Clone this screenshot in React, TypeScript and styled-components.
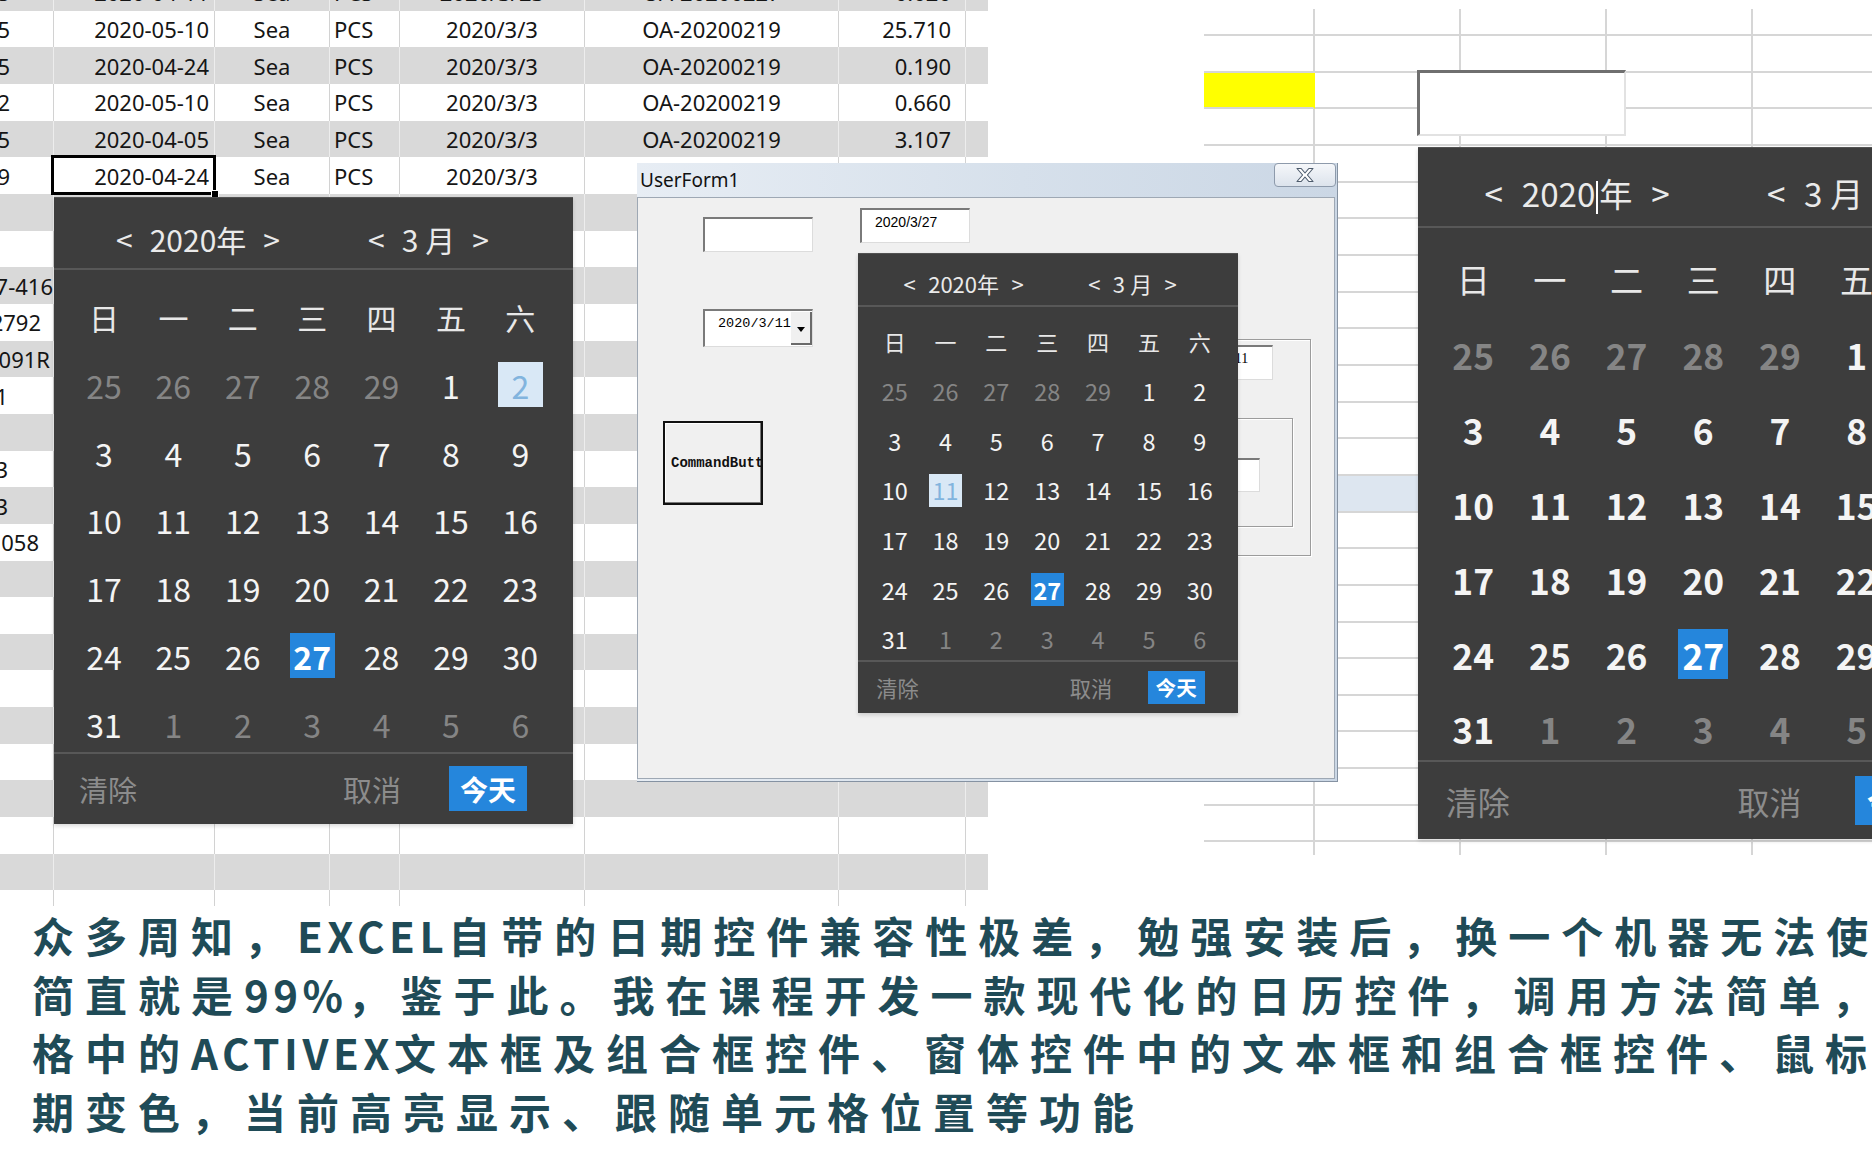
import React from "react"
import styled, { createGlobalStyle } from "styled-components"

const GlobalStyle = createGlobalStyle`
  html, body {
    margin: 0;
    padding: 0;
    background: #fff;
  }
  body {
    overflow: hidden;
  }
`

const ROW_H = 36.66
const WEEK = ["日", "一", "二", "三", "四", "五", "六"]

const DAYS: { n: number; other: boolean }[] = [
  ...[25, 26, 27, 28, 29].map((n) => ({ n, other: true })),
  ...Array.from({ length: 31 }, (_, i) => ({ n: i + 1, other: false })),
  ...Array.from({ length: 6 }, (_, i) => ({ n: i + 1, other: true })),
]

const LEFT_COLS = [
  { w: 54, align: "flex-end", pad: 0 },
  { w: 161, align: "flex-end", pad: 5 },
  { w: 115, align: "center", pad: 0 },
  { w: 70, align: "flex-start", pad: 4 },
  { w: 185, align: "center", pad: 0 },
  { w: 254, align: "center", pad: 0 },
  { w: 127, align: "flex-end", pad: 14 },
  { w: 22, align: "center", pad: 0 },
]

// first column: [text, right padding]
const FIRST_COL: [string, number][] = [
  ["3", 43], ["5", 43], ["5", 43], ["2", 43], ["5", 43], ["9", 43],
  ["", 0], ["", 0], ["37-416", 0], ["12792", 12], ["0091R", 3], ["1", 45],
  ["", 0], ["3", 45], ["3", 45], ["1058", 14],
]

const SHEET_DATA: string[][] = [
  ["2020-04-11", "Sea", "PCS", "2020/3/23", "OA-20200227", "0.020"],
  ["2020-05-10", "Sea", "PCS", "2020/3/3", "OA-20200219", "25.710"],
  ["2020-04-24", "Sea", "PCS", "2020/3/3", "OA-20200219", "0.190"],
  ["2020-05-10", "Sea", "PCS", "2020/3/3", "OA-20200219", "0.660"],
  ["2020-04-05", "Sea", "PCS", "2020/3/3", "OA-20200219", "3.107"],
  ["2020-04-24", "Sea", "PCS", "2020/3/3", "", ""],
]

const CAPTION = [
  "众多周知，EXCEL自带的日期控件兼容性极差，勉强安装后，换一个机器无法使",
  "简直就是99%，鉴于此。我在课程开发一款现代化的日历控件，调用方法简单，",
  "格中的ACTIVEX文本框及组合框控件、窗体控件中的文本框和组合框控件、鼠标",
  "期变色，当前高亮显示、跟随单元格位置等功能",
]

const Page = styled.div`
  position: relative;
  width: 1872px;
  height: 1170px;
  overflow: hidden;
  background: #fff;
  font-family: "Noto Sans CJK SC", "Noto Sans", sans-serif;
`

const Top = styled.div`
  display: flex;
  height: 906px;
`

/* ---------- left sheet ---------- */

const LeftSheet = styled.div`
  position: relative;
  width: 988px;
  height: 906px;
  flex-shrink: 0;
  overflow: hidden;
`

const SheetRows = styled.div`
  margin-top: -26px;
`

const SheetRow = styled.div<{ $shade: boolean }>`
  display: flex;
  height: ${ROW_H}px;
  background: ${(p) => (p.$shade ? "#d9d9d9" : "#fff")};
  font-family: "Noto Sans", sans-serif;
  font-size: 22px;
  color: #151515;
`

const Cell = styled.div<{ $w: number; $align: string; $pad: number; $shade: boolean; $last: boolean }>`
  width: ${(p) => p.$w}px;
  flex-shrink: 0;
  box-sizing: border-box;
  display: flex;
  align-items: center;
  justify-content: ${(p) => p.$align};
  padding-right: ${(p) => (p.$align === "flex-end" ? p.$pad : 0)}px;
  padding-left: ${(p) => (p.$align === "flex-start" ? p.$pad : 0)}px;
  overflow: hidden;
  white-space: nowrap;
  border-right: ${(p) => (p.$last ? "none" : `1px solid ${p.$shade ? "#ededed" : "#d2d2d2"}`)};
`

const Selection = styled.div`
  position: absolute;
  left: 51px;
  top: 155px;
  width: 165px;
  height: 40px;
  border: 3px solid #000;
  box-sizing: border-box;
`

const FillHandle = styled.div`
  position: absolute;
  right: -6px;
  bottom: -6px;
  width: 6px;
  height: 6px;
  background: #000;
  border: 1px solid #fff;
`

const Popup = styled.div<{ $x: number; $y: number }>`
  position: absolute;
  left: ${(p) => p.$x}px;
  top: ${(p) => p.$y}px;
  z-index: 2;
`

/* ---------- right sheet ---------- */

const RightSheet = styled.div`
  position: relative;
  margin-left: 216px;
  margin-top: 9px;
  width: 668px;
  flex-shrink: 0;
`

const Grid = styled.div`
  display: grid;
  grid-template-columns: 111px repeat(4, 146px);
  grid-template-rows: 27px repeat(22, ${ROW_H}px) 13px;
`

const GridCell = styled.div<{ $fill?: string; $open?: boolean }>`
  box-sizing: border-box;
  background: ${(p) => p.$fill || "#fff"};
  border-right: 2px solid ${(p) => (p.$fill === "#ffff00" ? "transparent" : "#d6d6d6")};
  border-bottom: ${(p) => (p.$open ? "none" : "2px solid #d6d6d6")};
`

const SheetTextBox = styled.div`
  position: absolute;
  left: 213px;
  top: 61px;
  width: 209px;
  height: 66px;
  box-sizing: border-box;
  background: #fff;
  border-top: 3px solid #6f6f6f;
  border-left: 3px solid #6f6f6f;
  border-right: 2px solid #e2e2e2;
  border-bottom: 2px solid #e2e2e2;
`

/* ---------- calendar ---------- */

const CalBox = styled.div<{ $s: number }>`
  width: ${(p) => 519 * p.$s}px;
  background: #3d3d3d;
  color: #efefef;
  font-family: "Noto Sans CJK SC", sans-serif;
  border-top: 1px solid #525252;
  box-sizing: border-box;
  box-shadow: 0 2px 4px rgba(0, 0, 0, 0.15);
`

const CalHead = styled.div<{ $s: number }>`
  height: ${(p) => 72 * p.$s}px;
  box-sizing: border-box;
  display: flex;
  align-items: center;
  justify-content: center;
  gap: ${(p) => 88 * p.$s}px;
  padding: ${(p) => 11 * p.$s}px ${(p) => 22 * p.$s}px 0 0;
  border-bottom: 2px solid #585858;
  font-size: ${(p) => 30 * p.$s}px;
  color: #eaeaea;
`

const Stepper = styled.div<{ $s: number }>`
  display: flex;
  align-items: center;
  gap: ${(p) => 17 * p.$s}px;
`

const MonthNum = styled.span<{ $s: number }>`
  margin-right: ${(p) => 7 * p.$s}px;
`

const Caret = styled.span<{ $s: number }>`
  display: inline-block;
  width: 2px;
  height: ${(p) => 30 * p.$s}px;
  margin: 0 1px;
  background: #fff;
  vertical-align: middle;
`

const Days = styled.div<{ $s: number }>`
  display: grid;
  grid-template-columns: repeat(7, ${(p) => 69.4 * p.$s}px);
  grid-auto-rows: ${(p) => 56 * p.$s}px;
  row-gap: ${(p) => 11.8 * p.$s}px;
  padding: ${(p) => 19 * p.$s}px 0 0 ${(p) => 15.3 * p.$s}px;
`

const Day = styled.div<{ $s: number; $tone: "week" | "cur" | "other"; $bold: boolean }>`
  display: flex;
  align-items: center;
  justify-content: center;
  font-size: ${(p) => (p.$tone === "week" ? 30 : 32) * p.$s}px;
  font-weight: ${(p) => (p.$bold && p.$tone !== "week" ? 700 : 400)};
  color: ${(p) => (p.$tone === "other" ? "#858585" : p.$tone === "week" ? "#e8e8e8" : "#f4f4f4")};
`

const DayNum = styled.span<{ $s: number; $mark: "none" | "today" | "light" }>`
  display: flex;
  align-items: center;
  justify-content: center;
  width: ${(p) => 45 * p.$s}px;
  height: ${(p) => 45 * p.$s}px;
  background: ${(p) => (p.$mark === "today" ? "#2586dc" : p.$mark === "light" ? "#d9e8f6" : "transparent")};
  color: ${(p) => (p.$mark === "today" ? "#fff" : p.$mark === "light" ? "#82b4de" : "inherit")};
  font-weight: ${(p) => (p.$mark === "today" ? 700 : "inherit")};
`

const CalFoot = styled.div<{ $s: number }>`
  height: ${(p) => 72 * p.$s}px;
  box-sizing: border-box;
  border-top: 2px solid #585858;
  display: flex;
  align-items: center;
  padding: 0 ${(p) => 46 * p.$s}px 0 ${(p) => 25 * p.$s}px;
  font-size: ${(p) => 29 * p.$s}px;
  color: #8c8c8c;
`

const FootSpacer = styled.div`
  flex: 1;
`

const TodayBtn = styled.div<{ $s: number }>`
  margin-left: ${(p) => 48 * p.$s}px;
  height: ${(p) => 45 * p.$s}px;
  padding: 0 ${(p) => 11 * p.$s}px;
  display: flex;
  align-items: center;
  background: #2586dc;
  color: #fff;
  font-weight: 700;
  font-size: ${(p) => 28 * p.$s}px;
`

type CalProps = { s: number; bold?: boolean; mark?: number; caret?: boolean }

const Calendar = ({ s, bold = false, mark, caret = false }: CalProps) => (
  <CalBox $s={s}>
    <CalHead $s={s}>
      <Stepper $s={s}>
        <span>&lt;</span>
        <span>
          2020
          {caret && <Caret $s={s} />}年
        </span>
        <span>&gt;</span>
      </Stepper>
      <Stepper $s={s}>
        <span>&lt;</span>
        <span>
          <MonthNum $s={s}>3</MonthNum>月
        </span>
        <span>&gt;</span>
      </Stepper>
    </CalHead>
    <Days $s={s}>
      {WEEK.map((w) => (
        <Day key={w} $s={s} $tone="week" $bold={bold}>
          {w}
        </Day>
      ))}
      {DAYS.map((d, i) => {
        const today = !d.other && d.n === 27
        const light = !d.other && d.n === mark
        return (
          <Day key={i} $s={s} $tone={d.other ? "other" : "cur"} $bold={bold}>
            <DayNum $s={s} $mark={today ? "today" : light ? "light" : "none"}>
              {d.n}
            </DayNum>
          </Day>
        )
      })}
    </Days>
    <CalFoot $s={s}>
      <span>清除</span>
      <FootSpacer />
      <span>取消</span>
      <TodayBtn $s={s}>今天</TodayBtn>
    </CalFoot>
  </CalBox>
)

/* ---------- user form ---------- */

const Dialog = styled.div`
  position: absolute;
  left: 637px;
  top: 163px;
  width: 701px;
  height: 619px;
  box-sizing: border-box;
  display: flex;
  flex-direction: column;
  background: linear-gradient(90deg, #e7edf4 0%, #d6e0eb 55%, #cbd7e5 100%);
  border-right: 1px solid #8592a2;
  border-bottom: 1px solid #8592a2;
  z-index: 1;
`

const TitleBar = styled.div`
  position: relative;
  height: 34px;
  flex-shrink: 0;
  display: flex;
  align-items: center;
  padding-left: 3px;
  font-family: "Noto Sans", sans-serif;
  font-size: 19px;
  color: #111;
`

const CloseBtn = styled.div`
  position: absolute;
  right: 1px;
  top: 0;
  width: 62px;
  height: 24px;
  box-sizing: border-box;
  border: 1px solid #8d9aab;
  border-radius: 4px;
  background: linear-gradient(#f5f7fa, #dce3ec);
  display: flex;
  align-items: center;
  justify-content: center;
`

const Client = styled.div`
  position: relative;
  flex: 1;
  margin: 0 2px 2px 0;
  background: #f0f0f0;
  border: 1px solid #9ea8b4;
`

const Control = styled.div<{ $x: number; $y: number; $w: number; $h: number }>`
  position: absolute;
  left: ${(p) => p.$x}px;
  top: ${(p) => p.$y}px;
  width: ${(p) => p.$w}px;
  height: ${(p) => p.$h}px;
  box-sizing: border-box;
`

const TextBox = styled(Control)<{ $serif?: boolean }>`
  background: #fff;
  border-top: 2px solid #7a7a7a;
  border-left: 2px solid #7a7a7a;
  border-right: 1px solid #dcdcdc;
  border-bottom: 1px solid #dcdcdc;
  padding: 4px 0 0 13px;
  font-family: ${(p) => (p.$serif ? '"Liberation Serif", serif' : '"Liberation Sans", sans-serif')};
  font-size: 14px;
  line-height: 16px;
  color: #000;
  white-space: nowrap;
  overflow: hidden;
`

const Combo = styled(Control)`
  display: flex;
  background: #fff;
  border-top: 2px solid #7a7a7a;
  border-left: 2px solid #7a7a7a;
  border-right: 1px solid #dcdcdc;
  border-bottom: 1px solid #dcdcdc;
`

const ComboText = styled.div`
  flex: 1;
  padding: 5px 0 0 13px;
  font-family: "Liberation Mono", monospace;
  font-size: 13.5px;
  line-height: 16px;
  color: #000;
`

const ComboArrow = styled.div`
  width: 21px;
  margin: 1px 0 1px 0;
  box-sizing: border-box;
  background: #f0f0f0;
  border-right: 2px solid #6a6a6a;
  border-bottom: 2px solid #6a6a6a;
  display: flex;
  align-items: center;
  justify-content: center;
  padding-top: 3px;

  &::after {
    content: "";
    border-left: 4px solid transparent;
    border-right: 4px solid transparent;
    border-top: 5px solid #000;
  }
`

const CmdButton = styled(Control)`
  display: flex;
  align-items: center;
  padding-left: 6px;
  background: #f0f0f0;
  border: 2px solid #111;
  box-shadow: inset -1px -1px 0 #7a7a7a, inset 1px 1px 0 #fff;
  font-family: "Liberation Mono", monospace;
  font-size: 14px;
  font-weight: 700;
  color: #111;
  white-space: nowrap;
  overflow: hidden;
`

const Frame = styled(Control)`
  border: 1px solid #9c9c9c;
  box-shadow: inset 1px 1px 0 #fff, 1px 1px 0 #fff;
`

/* ---------- caption ---------- */

const Caption = styled.div`
  padding-left: 32px;
  font-family: "Noto Sans CJK SC", sans-serif;
  font-weight: 700;
  font-size: 42px;
  line-height: 58.5px;
  letter-spacing: 11px;
  color: #1f4b57;
  white-space: nowrap;
`

const CaptionLine = styled.div``

const Latin = styled.span`
  letter-spacing: 4.5px;
`

const splitLatin = (line: string) =>
  line.split(/([A-Za-z0-9%]+)/).map((part, i) =>
    /^[A-Za-z0-9%]+$/.test(part) ? <Latin key={i}>{part}</Latin> : <React.Fragment key={i}>{part}</React.Fragment>
  )

export default function App() {
  return (
    <Page>
      <GlobalStyle />
      <Top>
        <LeftSheet>
          <SheetRows>
            {Array.from({ length: 26 }, (_, r) => {
              const shade = r % 2 === 0
              const data = SHEET_DATA[r] || []
              const first = FIRST_COL[r] || ["", 0]
              return (
                <SheetRow key={r} $shade={shade}>
                  {LEFT_COLS.map((c, ci) => (
                    <Cell
                      key={ci}
                      $w={c.w}
                      $align={c.align}
                      $pad={ci === 0 ? first[1] : c.pad}
                      $shade={shade}
                      $last={ci === LEFT_COLS.length - 1}
                    >
                      {ci === 0 ? first[0] : data[ci - 1] || ""}
                    </Cell>
                  ))}
                </SheetRow>
              )
            })}
          </SheetRows>
          <Selection>
            <FillHandle />
          </Selection>
          <Popup $x={54} $y={197}>
            <Calendar s={1} mark={2} />
          </Popup>
        </LeftSheet>

        <RightSheet>
          <Grid>
            {Array.from({ length: 24 }, (_, r) =>
              Array.from({ length: 5 }, (_, c) => (
                <GridCell
                  key={`${r}-${c}`}
                  $fill={r === 2 && c === 0 ? "#ffff00" : r === 13 ? "#dde6f0" : undefined}
                  $open={r === 23}
                />
              ))
            )}
          </Grid>
          <SheetTextBox />
          <Popup $x={214} $y={138}>
            <Calendar s={1.105} bold caret />
          </Popup>
        </RightSheet>
      </Top>

      <Dialog>
        <TitleBar>
          UserForm1
          <CloseBtn>
            <svg width="20" height="16" viewBox="0 0 20 16">
              <path
                d="M2 1.5h4.2L10 6l3.8-4.5H18l-5.6 6.5 5.6 6.5h-4.2L10 10l-3.8 4.5H2l5.6-6.5z"
                fill="#fff"
                stroke="#4d5b6c"
                strokeWidth="1.1"
                strokeLinejoin="round"
              />
            </svg>
          </CloseBtn>
        </TitleBar>
        <Client>
          <TextBox $x={65} $y={19} $w={110} $h={35} />
          <TextBox $x={222} $y={10} $w={110} $h={35}>
            2020/3/27
          </TextBox>
          <Combo $x={65} $y={111} $w={110} $h={38}>
            <ComboText>2020/3/11</ComboText>
            <ComboArrow />
          </Combo>
          <CmdButton $x={25} $y={223} $w={100} $h={84}>
            CommandButton1
          </CmdButton>
          <Frame $x={512} $y={141} $w={161} $h={217} />
          <TextBox $x={539} $y={147} $w={96} $h={35} $serif>
            2020/3/11
          </TextBox>
          <Frame $x={530} $y={220} $w={125} $h={109} />
          <TextBox $x={547} $y={260} $w={75} $h={34} />
          <Popup $x={220} $y={55}>
            <Calendar s={0.733} mark={11} />
          </Popup>
        </Client>
      </Dialog>

      <Caption>
        {CAPTION.map((line) => (
          <CaptionLine key={line}>{splitLatin(line)}</CaptionLine>
        ))}
      </Caption>
    </Page>
  )
}
